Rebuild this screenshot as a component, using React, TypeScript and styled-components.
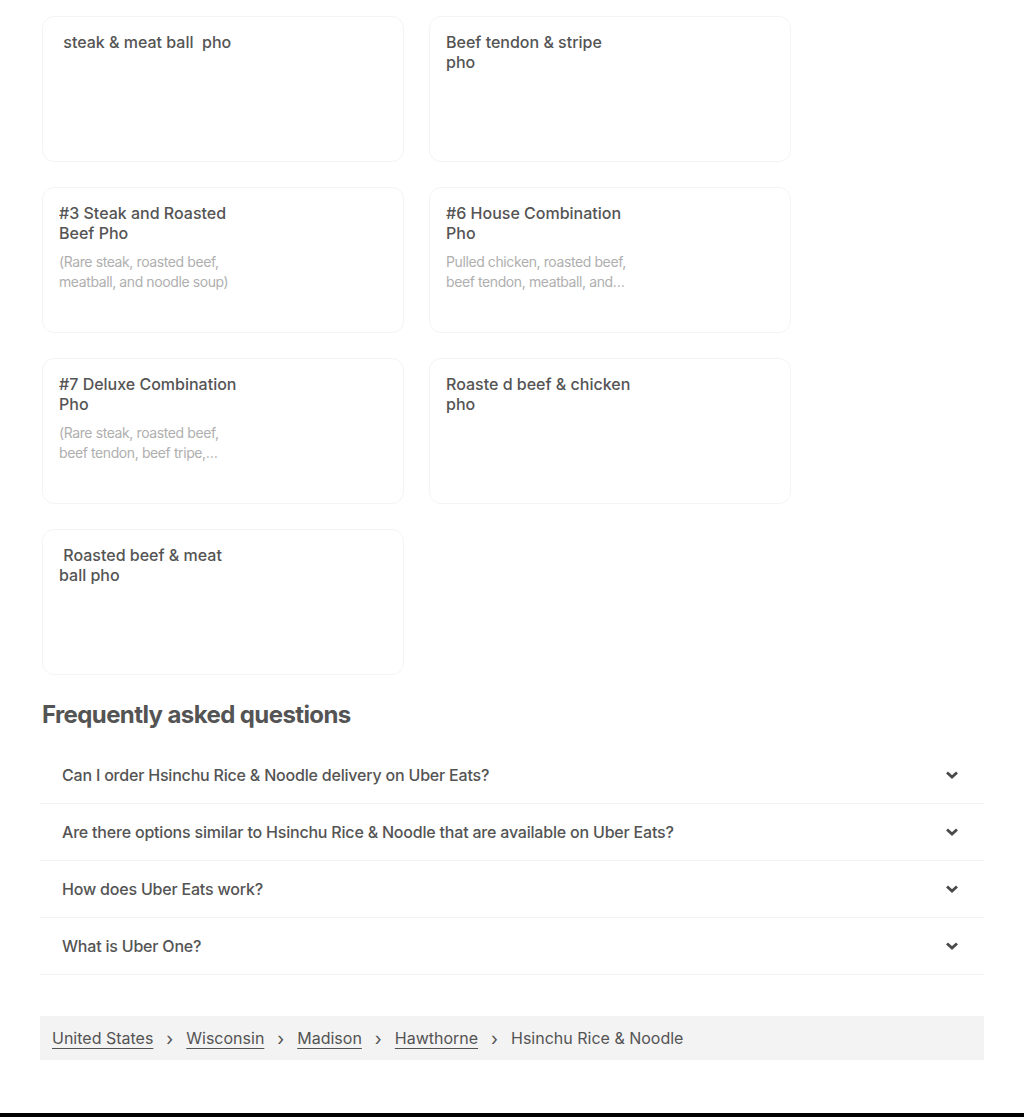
import React from 'react';
import styled, { createGlobalStyle } from 'styled-components';

const GlobalStyle = createGlobalStyle`
  html, body {
    margin: 0;
    padding: 0;
    background: #ffffff;
    font-family: Inter, "Liberation Sans", Arial, sans-serif;
    color: #545454;
  }
`;

const items = [
  { title: ' steak & meat ball  pho', desc: '' },
  { title: 'Beef tendon & stripe pho', desc: '' },
  { title: '#3 Steak and Roasted Beef Pho', desc: '(Rare steak, roasted beef, meatball, and noodle soup)' },
  { title: '#6 House Combination Pho', desc: 'Pulled chicken, roasted beef, beef tendon, meatball, and noodle soup' },
  { title: '#7 Deluxe Combination Pho', desc: '(Rare steak, roasted beef, beef tendon, beef tripe, meatball, and noodle soup)' },
  { title: 'Roaste d beef & chicken pho', desc: '' },
  { title: ' Roasted beef & meat ball pho', desc: '' },
];

const questions = [
  'Can I order Hsinchu Rice & Noodle delivery on Uber Eats?',
  'Are there options similar to Hsinchu Rice & Noodle that are available on Uber Eats?',
  'How does Uber Eats work?',
  'What is Uber One?',
];

const crumbs = ['United States', 'Wisconsin', 'Madison', 'Hawthorne'];

const Page = styled.div`
  padding: 16px 40px 0 40px;
`;

const Grid = styled.div`
  display: grid;
  grid-template-columns: repeat(2, 362px);
  column-gap: 25px;
  row-gap: 25px;
  padding-left: 2px;
`;

const Card = styled.div`
  height: 146px;
  box-sizing: border-box;
  border: 1px solid #f4f4f4;
  border-radius: 12px;
  padding: 15px 16px;
`;

const Info = styled.div`
  width: 185px;
`;

const Title = styled.div`
  font-size: 16px;
  line-height: 20px;
  font-weight: 500;
  color: #545454;
  white-space: pre-wrap;
`;

const Desc = styled.div`
  margin-top: 9px;
  font-size: 14px;
  line-height: 20px;
  letter-spacing: -0.4px;
  color: #afafaf;
  display: -webkit-box;
  -webkit-line-clamp: 2;
  -webkit-box-orient: vertical;
  overflow: hidden;
`;

const Heading = styled.h2`
  margin: 24px 0 0 2px;
  font-size: 24px;
  line-height: 32px;
  font-weight: 700;
  letter-spacing: -0.6px;
  color: #545454;
`;

const FaqList = styled.div`
  margin-top: 16px;
`;

const FaqRow = styled.div`
  display: flex;
  align-items: center;
  justify-content: space-between;
  height: 56px;
  padding: 0 25px 0 22px;
  border-bottom: 1px solid #f3f3f3;
`;

const Question = styled.span`
  font-size: 16px;
  font-weight: 500;
  letter-spacing: -0.2px;
  color: #545454;
`;

const Chevron = () => (
  <svg width="14" height="10" viewBox="0 0 14 10">
    <polyline points="2,2.5 7,7 12,2.5" fill="none" stroke="#4a4a4a" strokeWidth="2.8" />
  </svg>
);

const Breadcrumbs = styled.nav`
  margin-top: 41px;
  height: 44px;
  background: #f3f3f3;
  display: flex;
  align-items: center;
  padding: 0 12px;
  gap: 13px;
  font-size: 16px;
  color: #545454;
`;

const Crumb = styled.a`
  color: #545454;
  text-decoration: underline;
  text-underline-offset: 4px;
  text-decoration-thickness: 1px;
`;

const Sep = styled.span`
  font-size: 18px;
  color: #545454;
`;

const Footer = styled.div`
  margin-top: 53px;
  height: 200px;
  background: #000000;
  margin-left: -40px;
  margin-right: -40px;
`;

export default function App() {
  return (
    <>
      <GlobalStyle />
      <Page>
        <Grid>
          {items.map((item, i) => (
            <Card key={i}>
              <Info>
                <Title>{item.title}</Title>
                {item.desc && <Desc>{item.desc}</Desc>}
              </Info>
            </Card>
          ))}
        </Grid>
        <Heading>Frequently asked questions</Heading>
        <FaqList>
          {questions.map((q) => (
            <FaqRow key={q}>
              <Question>{q}</Question>
              <Chevron />
            </FaqRow>
          ))}
        </FaqList>
        <Breadcrumbs>
          {crumbs.map((c) => (
            <React.Fragment key={c}>
              <Crumb href="#">{c}</Crumb>
              <Sep>›</Sep>
            </React.Fragment>
          ))}
          <span>Hsinchu Rice &amp; Noodle</span>
        </Breadcrumbs>
        <Footer />
      </Page>
    </>
  );
}
